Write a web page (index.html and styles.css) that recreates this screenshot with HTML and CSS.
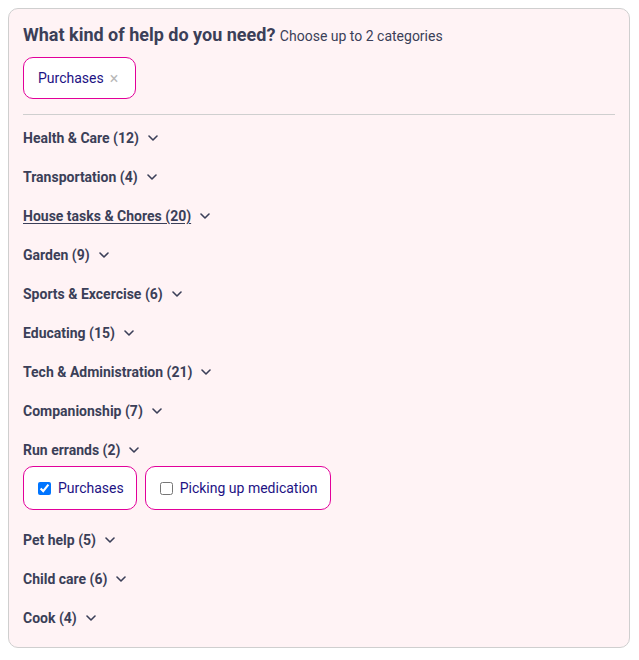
FILE: index.html
```html
<!DOCTYPE html>
<html lang="en">
<head>
<meta charset="utf-8">
<title>Help categories</title>
<link rel="stylesheet" href="styles.css">
</head>
<body>
<section class="card">
  <h2 class="title">What kind of help do you need? <span class="hint">Choose up to 2 categories</span></h2>
  <div class="selected">
    <span class="chip">Purchases <span class="chip-x">×</span></span>
  </div>
  <hr class="divider">
  <ul class="cats">
    <li class="cat"><span class="cat-head">Health &amp; Care (12)<svg class="chev" viewBox="0 0 10 6"><path d="M1 1l4 4 4-4"/></svg></span></li>
    <li class="cat"><span class="cat-head">Transportation (4)<svg class="chev" viewBox="0 0 10 6"><path d="M1 1l4 4 4-4"/></svg></span></li>
    <li class="cat"><span class="cat-head"><span class="u">House tasks &amp; Chores (20)</span><svg class="chev" viewBox="0 0 10 6"><path d="M1 1l4 4 4-4"/></svg></span></li>
    <li class="cat"><span class="cat-head">Garden (9)<svg class="chev" viewBox="0 0 10 6"><path d="M1 1l4 4 4-4"/></svg></span></li>
    <li class="cat"><span class="cat-head">Sports &amp; Excercise (6)<svg class="chev" viewBox="0 0 10 6"><path d="M1 1l4 4 4-4"/></svg></span></li>
    <li class="cat"><span class="cat-head">Educating (15)<svg class="chev" viewBox="0 0 10 6"><path d="M1 1l4 4 4-4"/></svg></span></li>
    <li class="cat"><span class="cat-head">Tech &amp; Administration (21)<svg class="chev" viewBox="0 0 10 6"><path d="M1 1l4 4 4-4"/></svg></span></li>
    <li class="cat"><span class="cat-head">Companionship (7)<svg class="chev" viewBox="0 0 10 6"><path d="M1 1l4 4 4-4"/></svg></span></li>
    <li class="cat"><span class="cat-head">Run errands (2)<svg class="chev" viewBox="0 0 10 6"><path d="M1 1l4 4 4-4"/></svg></span>
      <div class="options">
        <label class="opt"><input type="checkbox" checked> Purchases</label>
        <label class="opt"><input type="checkbox"> Picking up medication</label>
      </div>
    </li>
    <li class="cat"><span class="cat-head">Pet help (5)<svg class="chev" viewBox="0 0 10 6"><path d="M1 1l4 4 4-4"/></svg></span></li>
    <li class="cat"><span class="cat-head">Child care (6)<svg class="chev" viewBox="0 0 10 6"><path d="M1 1l4 4 4-4"/></svg></span></li>
    <li class="cat"><span class="cat-head">Cook (4)<svg class="chev" viewBox="0 0 10 6"><path d="M1 1l4 4 4-4"/></svg></span></li>
  </ul>
</section>
</body>
</html>
```
FILE: styles.css
```css
* { box-sizing: border-box; }
body {
  margin: 8px;
  font-family: Roboto, "Liberation Sans", sans-serif;
  color: #3b3f58;
  background: #fff;
}
.card {
  width: 622px;
  background: #fff3f5;
  border: 1px solid #cfcfcf;
  border-radius: 10px;
  padding: 14px 14px 19px;
}
.title {
  margin: 0;
  font-size: 18px;
  line-height: 24px;
  font-weight: 700;
  color: #3b3f58;
}
.hint {
  font-size: 14px;
  font-weight: 400;
}
.selected {
  margin-top: 9px;
  display: flex;
}
.chip {
  display: inline-flex;
  align-items: center;
  height: 42px;
  padding: 0 17px 0 14px;
  background: #fff;
  border: 1px solid #e2009a;
  border-radius: 10px;
  font-size: 14px;
  color: #1d1284;
}
.chip-x {
  margin-left: 6px;
  color: #b8b8b8;
  font-size: 16px;
}
.divider {
  margin: 15px 0 0;
  border: 0;
  border-top: 1px solid #cfcfcf;
}
.cats {
  list-style: none;
  margin: 13px 0 0;
  padding: 0;
  display: flex;
  flex-direction: column;
  gap: 19px;
}
.cat-head {
  display: inline-flex;
  align-items: center;
  font-size: 14px;
  line-height: 20px;
  font-weight: 700;
  color: #3b3f58;
}
.u { text-decoration: underline; text-underline-offset: 2px; }
.chev {
  width: 10px;
  height: 6px;
  margin-left: 9px;
  fill: none;
  stroke: #3b3f58;
  stroke-width: 1.6;
  stroke-linecap: round;
  stroke-linejoin: round;
}
.options {
  display: flex;
  gap: 8px;
  margin-top: 6px;
  margin-bottom: 1px;
}
.opt {
  display: inline-flex;
  align-items: center;
  height: 44px;
  padding: 0 12px 0 14px;
  background: #fff;
  border: 1px solid #e2009a;
  border-radius: 10px;
  font-size: 14px;
  color: #1d1284;
  gap: 7px;
}
.opt input {
  margin: 0;
  width: 13px;
  height: 13px;
}
```
